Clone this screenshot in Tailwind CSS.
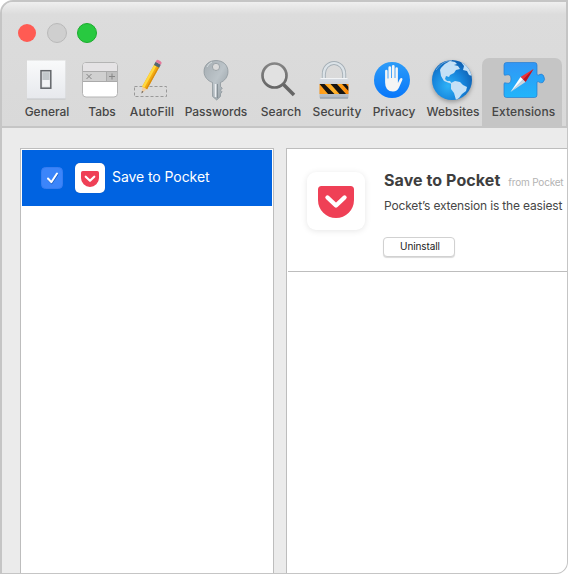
<!DOCTYPE html>
<html lang="en">
<head>
<meta charset="utf-8">
<title>Extensions</title>
<script src="https://cdn.jsdelivr.net/npm/@tailwindcss/browser@4"></script>
</head>
<body class="h-[574px] w-[568px] overflow-hidden bg-white font-['Inter',sans-serif] text-[#464646]">
<svg class="absolute size-0" aria-hidden="true">
  <defs>
    <linearGradient id="plate" x2="0" y2="1"><stop stop-color="#f9fafb"/><stop offset="1" stop-color="#e7e9ed"/></linearGradient>
    <linearGradient id="metal" x2="1" y2="1"><stop stop-color="#a5adb2"/><stop offset=".5" stop-color="#bcc4c9"/><stop offset="1" stop-color="#8d979d"/></linearGradient>
    <linearGradient id="blue" x2="0" y2="1"><stop stop-color="#2d9cf8"/><stop offset="1" stop-color="#0877fa"/></linearGradient>
    <linearGradient id="puzzle" x2="0" y2="1"><stop stop-color="#3296f5"/><stop offset="1" stop-color="#20b5fb"/></linearGradient>
    <linearGradient id="lockbody" x2="0" y2="1"><stop stop-color="#d8dde3"/><stop offset="1" stop-color="#aeb8c2"/></linearGradient>
    <linearGradient id="amber" x2="1"><stop stop-color="#ff9a18"/><stop offset=".5" stop-color="#ffb62e"/><stop offset="1" stop-color="#fb8605"/></linearGradient>
    <linearGradient id="ring" x2="0" y2="1"><stop stop-color="#858585"/><stop offset="1" stop-color="#666"/></linearGradient>
    <radialGradient id="ocean" cx=".4" cy=".65" r=".65"><stop stop-color="#2fb2f7"/><stop offset=".6" stop-color="#1684db"/><stop offset="1" stop-color="#0f62b4"/></radialGradient>
    <clipPath id="globe"><circle cx="22" cy="22" r="20"/></clipPath>
    <clipPath id="band"><path d="M4.500 26h29v10h-29z"/></clipPath>
    <symbol id="pocket" viewBox="0 0 36 32">
      <path fill="#ef4056" d="M3.500 0h29A3.500 3.500 0 0 1 36 3.500V14a18 18 0 0 1-36 0V3.500A3.500 3.500 0 0 1 3.500 0z"/>
      <path fill="none" stroke="#fff" stroke-width="4.400" stroke-linecap="round" stroke-linejoin="round" d="M9.500 11.500 18 19.500l8.500-8"/>
    </symbol>
  </defs>
</svg>
<div class="flex h-[574px] flex-col overflow-hidden rounded-tl-[13px] rounded-br-[12px] border-t-2 border-b border-l-2 border-r border-[#c5c5c5] bg-[#ebebeb]">
  <header class="flex h-[126px] shrink-0 flex-col border-b-2 border-r border-[#c5c5c5] bg-linear-to-b from-[#efefef] from-0% via-[#dcdcdc] via-10% to-[#d9d9d9] to-100%">
    <div class="flex h-[56px] shrink-0 gap-[10px] pt-[21px] pl-[16px]">
      <span class="mt-px mr-px size-[18px] rounded-full bg-[#ff5b53]"></span>
      <span class="size-[20px] rounded-full border border-[#b9b9b9] bg-[#cfcfcf]"></span>
      <span class="size-[20px] rounded-full border border-[#1bac2d] bg-[#28c940]"></span>
    </div>
    <nav class="flex h-[68px] pl-[18px] text-[12px] leading-4 font-medium whitespace-nowrap [&>div]:flex [&>div]:shrink-0 [&>div]:flex-col [&>div]:items-center [&_svg]:h-[46px] [&_svg]:shrink-0 [&_svg]:overflow-visible">
      <div class="w-[54px]">
        <svg width="40" viewBox="0 0 40 46"><path fill="#c3c5c8" d="M0 3h38.500v38.500H0z"/><path fill="url(#plate)" d="M0 2.500h38.500V40.500H0z"/><rect x="14" y="12.700" width="9.800" height="17.500" fill="#e0e2e4" stroke="#63666a" stroke-width="1.500"/><path fill="#c3c8cb" d="M15.500 14.200h7V22h-7z"/><path fill="#f2f3f5" d="M15.500 22h7v6.500h-7z"/></svg>
        <span>General</span>
      </div>
      <div class="w-[56px]">
        <svg width="40" viewBox="0 0 40 46"><rect x=".5" y="4.500" width="35" height="34.500" rx="3.500" fill="#fff" stroke="#b4b4b4"/><path fill="#e5e3e5" d="M1 13V8q0-3 3-3h28q3 0 3 3v5z"/><path fill="#d0d0d0" d="M1 13h34v10H1z"/><path fill="#c0c0c0" d="M24 13h11v10H24z"/><path stroke="#aaa" d="M1 13.500h34M1 23.500h34M24.500 13v10"/><path stroke="#858585" fill="none" d="m4.500 16 5 5m0-5-5 5M27 18.500h6m-3-3v6"/></svg>
        <span>Tabs</span>
      </div>
      <div class="w-[43px]">
        <svg width="44" viewBox="0 0 44 46"><rect x="4.500" y="28.500" width="32" height="10" fill="none" stroke="#999" stroke-dasharray="3 2"/><g transform="translate(11.500 35.500) rotate(29)"><path fill="#efcda2" d="m0 0-2.700-7h5.400z"/><path fill="#555" d="m0 0-.9-2.500H.9z"/><path fill="#f4aa10" d="M-2.800-31.500h5.600v25h-5.600z"/><path fill="#ffd83f" d="M-2.800-31.500h2.500v25h-2.500z"/><path fill="#d78c10" d="M1.500-31.500h1.300v25H1.500z"/><path fill="#526672" d="M-3-34.500h6v3.500h-6z"/><path fill="#e4799b" d="M-3-34.500v-1q0-2 2-2H1q2 0 2 2v1z"/></g></svg>
        <span class="pl-px tracking-[0.015em]">AutoFill</span>
      </div>
      <div class="w-[86px]">
        <svg width="30" viewBox="0 0 30 46"><path fill="url(#metal)" stroke="#879197" stroke-width=".7" fill-rule="evenodd" d="M15 2.500c7 0 12 4.600 12 11 0 5.500-3.500 9.500-7.500 11v4l1.800 1.700-1.800 2 1.500 1.600-1.500 2v2.600L15.700 42l-4.200-3.600V24.500C7 23 3 19 3 13.500c0-6.400 5-11 12-11zm0 2.800a3.600 3.600 0 1 0 0 7.200 3.600 3.600 0 0 0 0-7.200z"/><path stroke="#edf0f3" stroke-width="1.500" d="M14.500 26v13"/><path stroke="#7c878d" stroke-width=".8" d="M16.500 26v14"/><path d="M6 9q2-4 5-5" fill="none" stroke="#d5dcdf"/></svg>
        <span>Passwords</span>
      </div>
      <div class="w-[44px]">
        <svg width="42" viewBox="0 0 42 46"><circle cx="14.500" cy="17.500" r="12" fill="#eee" fill-opacity=".35" stroke="url(#ring)" stroke-width="2.700"/><path stroke="#666" stroke-width="3.600" d="m23.500 26.500 10.500 10.500"/></svg>
        <span>Search</span>
      </div>
      <div class="w-[68px]">
        <svg width="45" viewBox="0 0 45 46"><path fill="none" stroke="#a5afb6" stroke-width="4" d="M8.800 21.500V16a10.200 11 0 0 1 20.400 0v5.500"/><path fill="none" stroke="#dce3e8" stroke-width="2.200" d="M8.800 21.500V16a10.200 11 0 0 1 20.400 0v5.500"/><rect x="4.500" y="20" width="29" height="20.500" rx="1.500" fill="url(#lockbody)"/><path stroke="#f2f4f6" d="M5.500 20.500h27"/><path fill="url(#amber)" d="M4.500 26h29v10h-29z"/><path fill="#171512" clip-path="url(#band)" d="M4.500 26h5l10 10h-6.500zM15.500 26h6.500l9 10h-6.500zM27 26h4l2.500 3v4z"/><path stroke="#929ba3" d="M5 40h28"/></svg>
        <span class="tracking-[0.01em]">Security</span>
      </div>
      <div class="w-[46px]">
        <svg width="40" viewBox="0 0 40 46"><circle cx="18" cy="22" r="18" fill="url(#blue)"/><path fill="#f4f5f5" d="M11.100 24.500V13a1.250 1.250 0 0 1 2.500 0v7.500h.8V9.700a1.350 1.350 0 0 1 2.700 0V20h.8V8.300a1.350 1.350 0 0 1 2.700 0V20h.8v-9.500a1.250 1.250 0 0 1 2.500 0V25l2-4q1-1.500 2.200-.7.700.5.200 1.700L25 29.500q-1.700 4-6 4-7.900 0-7.900-9z"/></svg>
        <span>Privacy</span>
      </div>
      <div class="ml-[7px] w-[58px]">
        <svg width="44" viewBox="0 0 44 46" class="drop-shadow-[0_2px_2px_rgba(0,0,0,0.3)]"><circle cx="21" cy="22" r="20" fill="url(#ocean)"/><g clip-path="url(#globe)" fill="#c4e0f6" transform="translate(-1)"><path d="M11 10q4-5 9-7l5 1 2 2-3 1 4 1 2 3-4 1-2 3-4 2-1 2-3-1-1 3 2 2h3l2 3-3-1-5-2-3-5-1-6z"/><path d="m21 25 4-2 5 1 3 3 4 2-1 4-4 3-3 4-3 2-2-7-3-4z"/><path d="m31 4 5 2 4 5 2 7-3-1-2-4-4-1 1-4z"/></g><path fill="none" stroke="#fff" stroke-opacity=".35" d="M5 12Q11 3 21 2.500"/></svg>
        <span>Websites</span>
      </div>
      <div class="w-[80px] rounded-t-[7px] bg-[#c5c5c5] pl-[3px]">
        <svg width="40" viewBox="0 0 40 46"><path fill="url(#puzzle)" stroke="#277dd0" stroke-width=".7" d="M2.500 4.500h28q2.500 0 2.500 2.500v9q0 1.500 1.500 1 3-2 5 .5 2.500 4.500-.7 7-2 1-4.300-.7-1.500-.5-1.500 1V37q0 2.500-2.500 2.500h-28Q0 39.500 0 37V26q0-2 2-1 5 1.500 5-4t-5-4q-2 1-2-1V7q0-2.500 2.500-2.500z"/><path fill="#eb3339" d="m29.500 11-13 8 5 5z"/><path fill="#b71524" d="m29.500 11-8 13-2.500-2.500z"/><path fill="#fff" d="m6.500 34 10-15 2.500 2.500z"/><path fill="#ccd5de" d="m6.500 34 15-10-2.500-2.500z"/></svg>
        <span class="tracking-[0.005em]">Extensions</span>
      </div>
    </nav>
  </header>
  <main class="flex min-h-0 flex-1 gap-[12px] pt-[20px] pl-[18px]">
    <aside class="w-[254px] shrink-0 border border-b-0 border-[#bdbdbd] bg-white p-px">
      <div class="flex h-[56px] items-center bg-[#0063e1] pl-[19px] text-white">
        <svg class="size-[22px]" viewBox="0 0 22 22"><rect x=".5" y=".5" width="21" height="21" rx="4" fill="#3c85fa" stroke="#377df0"/><path fill="none" stroke="#1759bd" stroke-width="2" d="m7.500 12.500 3.200 3.500 6-9"/><path fill="none" stroke="#fff" stroke-width="2" stroke-linecap="round" stroke-linejoin="round" d="m7 11.500 3.300 3.700 5.700-8.700"/></svg>
        <span class="ml-[12px] flex size-[30px] items-center justify-center rounded-[5px] bg-white pt-px shadow-[0_0_1px_#164d9c]"><svg width="18" height="16"><use href="#pocket"/></svg></span>
        <span class="ml-[7px] pb-[2px] text-[14px] leading-5 tracking-[-0.005em] whitespace-nowrap">Save to Pocket</span>
      </div>
    </aside>
    <section class="min-w-0 flex-1 overflow-hidden rounded-br-[11px] border-t border-l border-[#bdbdbd] bg-white pl-px">
      <div class="flex h-[123px] border-b border-[#bdbdbd] pt-[22px] pl-[19px]">
        <div class="mt-px flex size-[58px] shrink-0 items-center justify-center rounded-[9px] bg-white pt-[2px] shadow-[0_1px_6px_rgba(0,0,0,0.1)]"><svg width="36" height="32"><use href="#pocket"/></svg></div>
        <div class="ml-[19px] whitespace-nowrap">
          <div class="-mt-px flex h-[20px] items-baseline"><h1 class="text-[16px] leading-5 font-bold tracking-[0.005em] text-[#3e3e3e]">Save to Pocket</h1><span class="ml-[8px] text-[10px] tracking-[-0.02em] text-[#b3b3b3]">from Pocket</span></div>
          <p class="mt-[8px] text-[12px] leading-4 tracking-[-0.013em]">Pocket’s extension is the easiest</p>
          <button class="mt-[23px] -ml-px flex h-[20px] w-[72px] items-center justify-center rounded-[4px] border border-[#d1d1d1] bg-white pb-px pl-[2px] text-[10px] tracking-[-0.01em] text-[#222] shadow-[0_1px_1px_rgba(0,0,0,0.15)]">Uninstall</button>
        </div>
      </div>
    </section>
  </main>
</div>
</body>
</html>
